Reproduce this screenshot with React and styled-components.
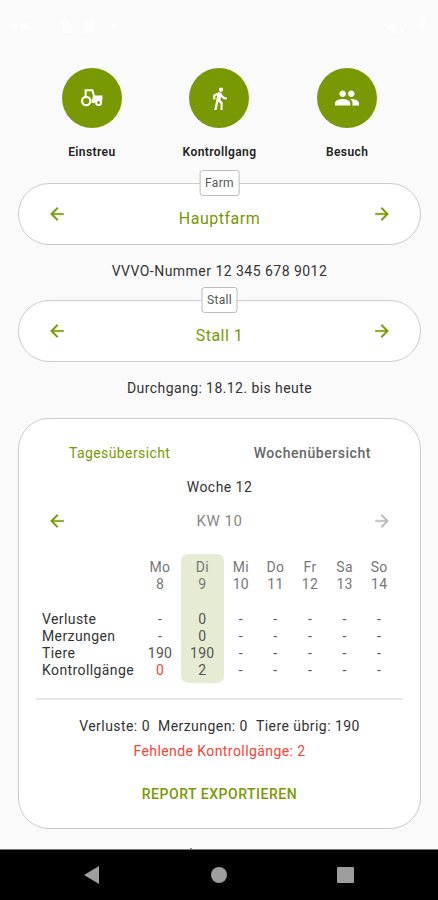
import styled, { createGlobalStyle } from 'styled-components';
import {
  MdArrowBack,
  MdArrowForward,
  MdDirectionsWalk,
  MdPeople,
} from 'react-icons/md';

const GlobalStyle = createGlobalStyle`
  * {
    box-sizing: border-box;
  }
  body {
    margin: 0;
    background-color: #fafafa;
    font-family: Roboto, "Liberation Sans", sans-serif;
    color: #333;
  }
  button {
    border: none;
    background: none;
    padding: 0;
    font: inherit;
    color: inherit;
  }
`;

const Screen = styled.div`
  width: 438px;
  height: 900px;
  display: flex;
  flex-direction: column;
  overflow: hidden;
`;

const StatusBar = styled.div`
  height: 52px;
  padding: 20px 7px 0 12px;
  display: flex;
  justify-content: space-between;
  opacity: 0.7;
`;

const Content = styled.main`
  flex: 1;
  min-height: 0;
  padding: 16px 17px 0 18px;
  overflow: hidden;
  display: flex;
  flex-direction: column;
  > * {
    flex-shrink: 0;
  }
`;

const Actions = styled.div`
  display: grid;
  grid-template-columns: repeat(3, 1fr);
  padding: 0 10px;
  height: 115px;
`;

const Action = styled.div`
  display: flex;
  flex-direction: column;
  align-items: center;
`;

const RoundButton = styled.button`
  width: 60px;
  height: 60px;
  border-radius: 50%;
  background-color: #789904;
  color: #fff;
  display: flex;
  align-items: center;
  justify-content: center;
`;

const ActionLabel = styled.span`
  margin-top: 17px;
  font-size: 12px;
  line-height: 14px;
  font-weight: 600;
  letter-spacing: 0.4px;
  color: #222;
`;

const Selector = styled.div`
  position: relative;
  height: 62px;
  padding: 0 28px;
  border: 1px solid #ccc;
  border-radius: 31px;
  background-color: #fff;
  display: flex;
  align-items: center;
  justify-content: space-between;
`;

/* sits on top of the selector border */
const SelectorTag = styled.span`
  position: absolute;
  top: -14px;
  left: 50%;
  transform: translateX(-50%);
  height: 26px;
  padding: 0 5px;
  border: 1px solid #bdbdbd;
  border-radius: 3px;
  background-color: #fff;
  font-size: 12px;
  line-height: 24px;
  letter-spacing: 0.3px;
  color: #555;
`;

const SelectorValue = styled.span`
  padding-top: 10px;
  font-size: 16px;
  line-height: 20px;
  letter-spacing: 0.5px;
  color: #789904;
`;

const ArrowButton = styled.button`
  width: 20px;
  height: 20px;
  color: ${(props) => (props.$disabled ? '#bdbdbd' : '#789904')};
  svg {
    display: block;
    stroke-width: 0.4px;
  }
  path[fill='none'] {
    stroke: none;
  }
`;

const Info = styled.p`
  margin: 0;
  height: ${(props) => props.$height}px;
  padding-top: 17px;
  font-size: 14px;
  line-height: 18px;
  letter-spacing: ${(props) => props.$spacing}px;
  text-align: center;
`;

const Card = styled.section`
  height: 411px;
  border: 1px solid #ccc;
  border-radius: 31px;
  background-color: #fff;
  padding: 25px 17px 0;
`;

const Tabs = styled.div`
  display: flex;
  justify-content: space-between;
  padding: 0 32px 0 33px;
`;

const Tab = styled.button`
  font-size: 14px;
  line-height: 18px;
  letter-spacing: ${(props) => (props.$active ? 0.4 : 0.55)}px;
  font-weight: ${(props) => (props.$active ? 400 : 500)};
  color: ${(props) => (props.$active ? '#789904' : '#666')};
`;

const Week = styled.p`
  margin: 16px 0 0;
  font-size: 14px;
  line-height: 18px;
  letter-spacing: 0.45px;
  text-align: center;
`;

const WeekPicker = styled.div`
  display: flex;
  align-items: center;
  justify-content: space-between;
  margin-top: 15px;
  padding: 0 11px;
  font-size: 15px;
  line-height: 20px;
  letter-spacing: 0.5px;
  color: #888;
`;

const Table = styled.div`
  display: grid;
  grid-template-columns: 97px 42px 42.5px repeat(5, 34.6px);
  margin: 23px 0 0 6px;
`;

const Column = styled.div`
  height: 129px;
  padding-top: 5px;
  border-radius: 7px;
  background-color: ${(props) => (props.$selected ? '#e6ecd3' : 'transparent')};
  font-size: 14px;
  line-height: 17px;
  letter-spacing: 0.3px;
  text-align: center;
  color: #555;
`;

const RowLabels = styled.div`
  padding-top: 57px;
  font-size: 14px;
  line-height: 17px;
  letter-spacing: 0.4px;
  white-space: nowrap;
`;

const DayHead = styled.div`
  margin-bottom: 18px;
  color: #777;
`;

const Cell = styled.div`
  color: ${(props) => (props.$missing ? '#f44336' : 'inherit')};
`;

const Divider = styled.hr`
  margin: 15px 0 0;
  border: none;
  height: 2px;
  background-color: #e8e8e8;
`;

const Totals = styled.div`
  display: flex;
  justify-content: center;
  gap: 8px;
  margin-top: 17px;
  font-size: 14px;
  line-height: 18px;
  letter-spacing: 0.45px;
`;

const Missing = styled.p`
  margin: 7px 0 0;
  font-size: 14px;
  line-height: 18px;
  letter-spacing: 0.42px;
  text-align: center;
  color: #f44336;
`;

const ExportButton = styled.button`
  display: block;
  margin: 25px auto 0;
  font-size: 14px;
  line-height: 18px;
  font-weight: 500;
  letter-spacing: 0.52px;
  color: #789904;
`;

/* top edge of the next section, cut off by the nav bar */
const NextSection = styled.div`
  width: 2px;
  height: 1px;
  margin: 19px 0 0 172px;
  background-color: #888;
`;

const NavBar = styled.nav`
  height: 51px;
  border-top: 1px solid #777;
  background-color: #000;
  display: flex;
  align-items: center;
  justify-content: space-between;
  padding: 0 84px 0 83px;
`;

const DAYS = [
  { name: 'Mo', date: 8, values: ['-', '-', '190', '0'], missing: true },
  { name: 'Di', date: 9, values: ['0', '0', '190', '2'], selected: true },
  { name: 'Mi', date: 10, values: ['-', '-', '-', '-'] },
  { name: 'Do', date: 11, values: ['-', '-', '-', '-'] },
  { name: 'Fr', date: 12, values: ['-', '-', '-', '-'] },
  { name: 'Sa', date: 13, values: ['-', '-', '-', '-'] },
  { name: 'So', date: 14, values: ['-', '-', '-', '-'] },
];

function TractorIcon() {
  return (
    <svg width="24" height="20" viewBox="0 0 24 20" fill="none" stroke="#fff">
      <circle cx="6.2" cy="13" r="4.2" strokeWidth="2.2" />
      <circle cx="18.6" cy="14.6" r="2.5" strokeWidth="2" />
      <path d="M5.6 8V2.2h6.8l1.8 6.4" strokeWidth="2" />
      <path d="M13 7.6h9.4v5h-1.2a4 4 0 0 0-6.4 2.4h-3.4z" fill="#fff" stroke="none" />
    </svg>
  );
}

function Picker({ label, value }) {
  return (
    <Selector>
      <SelectorTag>{label}</SelectorTag>
      <ArrowButton>
        <MdArrowBack size={20} />
      </ArrowButton>
      <SelectorValue>{value}</SelectorValue>
      <ArrowButton>
        <MdArrowForward size={20} />
      </ArrowButton>
    </Selector>
  );
}

function App() {
  return (
    <>
      <GlobalStyle />
      <Screen>
        <StatusBar>
          <svg width="118" height="14" fill="#fff">
            <path d="M0 4h6v5H0zM9 3h7v7H9zM50 1h7l3 5v7H50zM72 1h11v12H72zM98 9l5-7 5 7z" />
          </svg>
          <svg width="48" height="14" fill="#fff">
            <path d="M0 5q6-6 13 0v8H9zM18 9h3v3h-3zM34 6l8-6v12h-4z" />
          </svg>
        </StatusBar>
        <Content>
          <Actions>
            <Action>
              <RoundButton>
                <TractorIcon />
              </RoundButton>
              <ActionLabel>Einstreu</ActionLabel>
            </Action>
            <Action>
              <RoundButton>
                <MdDirectionsWalk size={25} strokeWidth={0} />
              </RoundButton>
              <ActionLabel>Kontrollgang</ActionLabel>
            </Action>
            <Action>
              <RoundButton>
                <MdPeople size={26} />
              </RoundButton>
              <ActionLabel>Besuch</ActionLabel>
            </Action>
          </Actions>
          <Picker label="Farm" value="Hauptfarm" />
          <Info $height={55} $spacing={0.47}>
            VVVO-Nummer 12 345 678 9012
          </Info>
          <Picker label="Stall" value="Stall 1" />
          <Info $height={56} $spacing={0.42}>
            Durchgang: 18.12. bis heute
          </Info>
          <Card>
            <Tabs>
              <Tab $active>Tagesübersicht</Tab>
              <Tab>Wochenübersicht</Tab>
            </Tabs>
            <Week>Woche 12</Week>
            <WeekPicker>
              <ArrowButton>
                <MdArrowBack size={20} />
              </ArrowButton>
              <span>KW 10</span>
              <ArrowButton $disabled>
                <MdArrowForward size={20} />
              </ArrowButton>
            </WeekPicker>
            <Table>
              <RowLabels>
                <div>Verluste</div>
                <div>Merzungen</div>
                <div>Tiere</div>
                <div>Kontrollgänge</div>
              </RowLabels>
              {DAYS.map((day) => (
                <Column key={day.name} $selected={day.selected}>
                  <DayHead>
                    <div>{day.name}</div>
                    <div>{day.date}</div>
                  </DayHead>
                  {day.values.map((value, i) => (
                    <Cell key={i} $missing={day.missing && i === 3}>
                      {value}
                    </Cell>
                  ))}
                </Column>
              ))}
            </Table>
            <Divider />
            <Totals>
              <span>Verluste: 0</span>
              <span>Merzungen: 0</span>
              <span>Tiere übrig: 190</span>
            </Totals>
            <Missing>Fehlende Kontrollgänge: 2</Missing>
            <ExportButton>REPORT EXPORTIEREN</ExportButton>
          </Card>
          <NextSection />
        </Content>
        <NavBar>
          <svg width="17" height="18" fill="#9e9e9e">
            <path d="M1 9L16 0v18z" />
          </svg>
          <svg width="18" height="18" fill="#9e9e9e">
            <circle cx="9" cy="9" r="8" />
          </svg>
          <svg width="17" height="18" fill="#9e9e9e">
            <rect y="1" width="17" height="16" rx="1" />
          </svg>
        </NavBar>
      </Screen>
    </>
  );
}

export default App;
